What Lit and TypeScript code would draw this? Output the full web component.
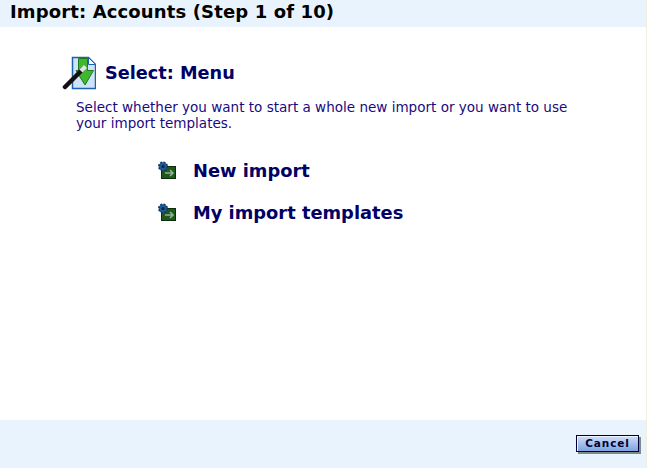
import { LitElement, html, css } from "lit";
import { customElement } from "lit/decorators.js";

const linkIcon = html`<svg width="18" height="18" viewBox="0 0 18 18">
  <rect x="3.500" y="5.500" width="14" height="12" fill="#1c5a1c" stroke="#0c2c10"/>
  <path d="M7 12h8M12 9l3 3-3 3" fill="none" stroke="#93b093" stroke-width="1.6"/>
  <circle cx="5" cy="5.500" r="4.200" fill="#1d5a96" stroke="#123a68" stroke-width="1.600" stroke-dasharray="2 1.300"/>
  <circle cx="5" cy="5.500" r="1.500" fill="#0a2038"/>
</svg>`;

@customElement("app-root")
export class AppRoot extends LitElement {
  static styles = css`
    :host { display: flex; flex-direction: column; width: 647px; height: 468px; box-sizing: border-box; border-right: 1px solid #f2eee0; font-family: "DejaVu Sans", Verdana, sans-serif; background: #fff; overflow: hidden; }
    .head { height: 27px; background: #e9f3fd; box-sizing: border-box; padding: 1px 0 0 10px; font-size: 18px; letter-spacing: .13px; line-height: 22px; font-weight: bold; color: #000; flex: none; }
    .main { flex: 1; padding: 29px 0 0 62px; }
    .title { display: flex; align-items: center; gap: 9px; height: 34px; }
    .title h1 { margin: 0; font-size: 17.7px; font-weight: bold; color: #000066; line-height: 20px; }
    .desc { margin: 9px 0 0 14px; width: 510px; font-size: 13.54px; line-height: 16px; color: #1a0a80; }
    .links { margin: 29px 0 0 96px; display: flex; flex-direction: column; gap: 22px; }
    .link { display: flex; align-items: center; gap: 17px; height: 20px; font-size: 17.85px; font-weight: bold; color: #000066; }
    .foot { height: 48px; flex: none; background: #e9f3fd; display: flex; justify-content: flex-end; align-items: flex-start; padding: 15px 7px 0 0; box-sizing: border-box; }
    .btn { width: 63px; height: 17px; box-sizing: border-box; border: 1px solid #000033; background: linear-gradient(#cfdff6, #7fa2e2); box-shadow: inset 1px 1px 0 #eef4fd, 2px 2px 0 #7d8a8a; font: bold 10.5px/15px "DejaVu Sans", Verdana, sans-serif; letter-spacing: .9px; color: #000033; padding: 0; }
  `;
  render() {
    return html`
      <div class="head">Import: Accounts (Step 1 of 10)</div>
      <div class="main">
        <div class="title">
          <svg width="34" height="34" viewBox="0 0 34 34">
            <path d="M10.500 1.500h16l7 7v24h-23z" fill="#cfe3f8" stroke="#1d5fb0" stroke-width="1.500"/>
            <path d="M26.500 1.500v7h7z" fill="#fff" stroke="#1d5fb0"/>
            <path d="M16.500 2.500h9v12h6L23 29 14 14.500h2.500z" fill="#3fb82f" stroke="#1f7a1f"/>
            <path d="M3 31L21 13" stroke="#111" stroke-width="4.500" stroke-linecap="round"/>
            <path d="M19 15l4.500-4.500" stroke="#e4e4e4" stroke-width="4.500"/>
          </svg>
          <h1>Select: Menu</h1>
        </div>
        <div class="desc">Select whether you want to start a whole new import or you want to use your import templates.</div>
        <div class="links">
          <div class="link">${linkIcon}<span>New import</span></div>
          <div class="link">${linkIcon}<span>My import templates</span></div>
        </div>
      </div>
      <div class="foot"><button class="btn">Cancel</button></div>
    `;
  }
}
